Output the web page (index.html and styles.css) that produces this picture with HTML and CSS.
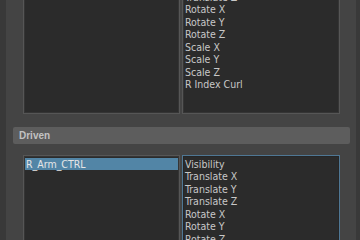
FILE: index.html
```html
<!DOCTYPE html>
<html>
    <head>
        <title>Set Driven Key</title>
        <link rel="stylesheet" href="styles.css">
    </head>
    <body>
        <div id="Panel">
            <div class="ListPair" id="DriverLists">
                <div class="List"></div>
                <div class="List">
                    <div class="Item">Translate Z</div>
                    <div class="Item">Rotate X</div>
                    <div class="Item">Rotate Y</div>
                    <div class="Item">Rotate Z</div>
                    <div class="Item">Scale X</div>
                    <div class="Item">Scale Y</div>
                    <div class="Item">Scale Z</div>
                    <div class="Item">R Index Curl</div>
                </div>
            </div>
            <div class="FrameBar">Driven</div>
            <div class="ListPair" id="DrivenLists">
                <div class="List">
                    <div class="Item Selected">R_Arm_CTRL</div>
                </div>
                <div class="List Focused">
                    <div class="Item">Visibility</div>
                    <div class="Item">Translate X</div>
                    <div class="Item">Translate Y</div>
                    <div class="Item">Translate Z</div>
                    <div class="Item">Rotate X</div>
                    <div class="Item">Rotate Y</div>
                    <div class="Item">Rotate Z</div>
                </div>
            </div>
        </div>
    </body>
</html>
```
FILE: styles.css
```css
html, body{
    margin: 0;
    height: 100%;
    overflow: hidden;
}

body{
    background-color: #393939;
    padding: 0 4px 0 6px;
    font-family: 'Liberation Sans Narrow', 'DejaVu Sans Condensed', 'Liberation Sans', sans-serif;
    font-size: 10.5px;
    color: #c8c8c8;
}

#Panel{
    height: 100%;
    background-color: #444444;
    padding: 0 6px 0 7px;
    display: flex;
    flex-direction: column;
}

.ListPair{
    display: grid;
    grid-template-columns: 157px 158px;
    gap: 2px;
    margin-left: 10px;
}

#DriverLists{
    margin-top: -12px;
    height: 126px;
    flex-shrink: 0;
}

#DrivenLists{
    margin-top: 11px;
    height: 88px;
    flex-shrink: 0;
}

.List{
    box-sizing: border-box;
    background-color: #2b2b2b;
    border: 1px solid #565656;
    box-shadow: inset 0 0 0 1px #353535;
    padding: 1.5px 1px;
    overflow: hidden;
}

.List.Focused{
    border-color: #4f7794;
    box-shadow: inset 0 0 0 1px #262626;
}

.Item{
    height: 12.5px;
    line-height: 12.5px;
    padding-left: 1px;
    white-space: nowrap;
}

.Item.Selected{
    background-color: #5285a6;
    color: #e6e6e6;
}

.FrameBar{
    flex-shrink: 0;
    margin-top: 13px;
    height: 17px;
    line-height: 17px;
    background-color: #5d5d5d;
    border-radius: 2px;
    padding-left: 6px;
    font-family: 'Liberation Sans', sans-serif;
    font-weight: bold;
    font-size: 10px;
    color: #c2c2c2;
}
```
